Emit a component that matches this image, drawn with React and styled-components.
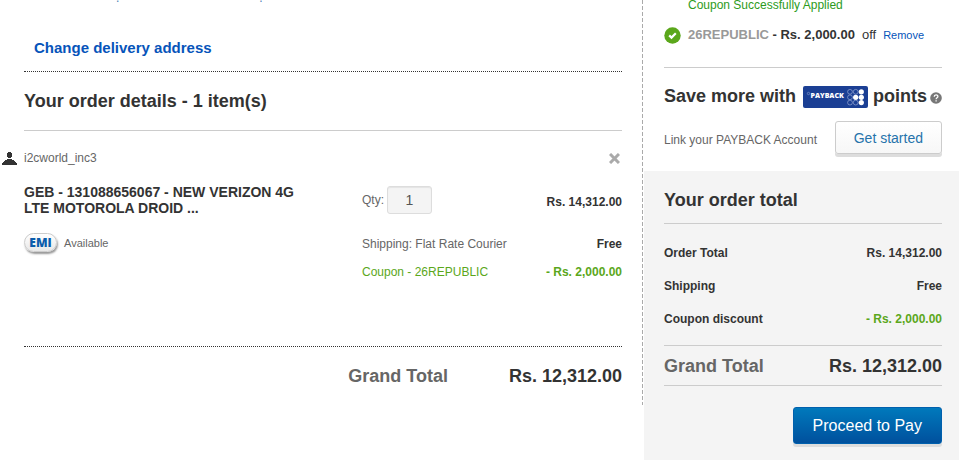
import React, { useState } from 'react';
import styled, { createGlobalStyle } from 'styled-components';

const totals = [
  { label: "Order Total", value: "Rs. 14,312.00" },
  { label: "Shipping", value: "Free" },
  { label: "Coupon discount", value: "- Rs. 2,000.00", discount: true },
];

const GlobalStyle = createGlobalStyle`
  * {
    box-sizing: border-box;
  }

  body {
    margin: 0;
    background: #fff;
    color: #333;
    font-family: "Liberation Sans", Arial, sans-serif;
    font-size: 12px;
    line-height: 16px;
  }
`

const Page = styled.div`
  display: flex;
  align-items: flex-start;
  min-height: 100vh;
`
const Main = styled.main`
  flex: 1;
  min-width: 0;
  min-height: 405px;
  padding: 0 21px 0 24px;
  background: repeating-linear-gradient(#aaa 0 4px, transparent 4px 6px) right / 1px 100% no-repeat;
`
const Side = styled.aside`
  flex: 0 0 315px;
  min-height: 100vh;
  margin-left: 1px;
  display: flex;
  flex-direction: column;
`

const AddressEdge = styled.div`
  display: flex;
  gap: 140px;
  height: 2px;
  padding-left: 92px;
  overflow: hidden;
  align-items: flex-end;
  line-height: 8px;
  color: #4f7fb5;
`
const AddressRow = styled.div`
  padding: 36px 10px 13px;
  height: 70px;
  border-bottom: 1px dotted #333;
  line-height: 20px;
`
const AddressLink = styled.a`
  color: #0654ba;
  font-size: 15px;
  font-weight: bold;
  text-decoration: none;
`
const Title = styled.h2`
  margin: 0;
  padding: ${(props)=>props.$pad || "0"};
  border-bottom: ${(props)=>props.$line ? "1px solid #ccc" : "none"};
  display: flex;
  align-items: center;
  font-size: 18px;
  line-height: 24px;
  white-space: nowrap;
`
const Seller = styled.div`
  display: flex;
  align-items: center;
  gap: 7px;
  height: 18px;
  margin: 18px 0 17px -22px;
  color: #666;
`
const CloseButton = styled.button`
  display: flex;
  margin-left: auto;
  padding: 0 2px;
  border: 0;
  background: none;
  cursor: pointer;
`
const Item = styled.div`
  display: grid;
  grid-template-columns: 13fr 10fr;
  min-height: 163px;
  border-bottom: 1px dotted #333;
`
const ProductName = styled.h3`
  max-width: 290px;
  margin: 0 0 17px;
  font-size: 14px;
  line-height: 16px;
`
const Available = styled.div`
  display: flex;
  align-items: center;
  gap: 7px;
  color: #666;
  font-size: 11px;
`
const EmiBadge = styled.span`
  width: 33px;
  height: 19px;
  border: 1px solid #ccc;
  border-radius: 10px;
  background: linear-gradient(#fff, #e8e8e8);
  box-shadow: 1px 2px 2px #999;
  color: #0a5cab;
  font-family: "Open Sans", sans-serif;
  font-size: 12px;
  font-weight: 800;
  line-height: 17px;
  text-align: center;
`
const Line = styled.div`
  display: flex;
  align-items: center;
  justify-content: space-between;
  height: 28px;
  color: ${(props)=>props.$green ? "#5ba71b" : "#666"};
`
const QtyLine = styled(Line)`
  align-items: flex-end;
  height: 30px;
  margin-bottom: 16px;
`
const Price = styled.strong`
  color: ${(props)=>props.$green ? "#5ba71b" : "#333"};

  ${QtyLine} & {
    padding-bottom: 4px;
  }
`
const QtyLabel = styled.label`
  display: flex;
  align-items: center;
  gap: 3px;
`
const QtyInput = styled.input`
  width: 45px;
  height: 28px;
  padding: 0;
  border: 1px solid #ddd;
  border-radius: 3px;
  background: #f4f4f4;
  box-shadow: inset 0 1px 1px #e4e4e4;
  color: #555;
  font: 14px "Liberation Sans", Arial, sans-serif;
  text-align: center;
`
const GrandTotal = styled.div`
  display: flex;
  align-items: center;
  justify-content: flex-end;
  gap: 61px;
  height: 58px;
  font-size: 18px;
  font-weight: bold;
  white-space: nowrap;

  span {
    color: #666;
  }
`
const SideTotal = styled(GrandTotal)`
  justify-content: space-between;
  gap: 10px;
  height: 41px;
  border: solid #ccc;
  border-width: 1px 0;
`

const Savings = styled.section`
  padding: 0 17px 13px 20px;
`
const Notice = styled.p`
  margin: 0;
  padding-left: 24px;
  color: #2d9b1c;
  line-height: 10px;
`
const Coupon = styled.div`
  display: flex;
  align-items: center;
  gap: 7px;
  height: 58px;
  padding-bottom: 7px;
  border-bottom: 1px solid #ccc;
  font-size: 13px;

  b > span {
    color: #999;
  }
`
const RemoveLink = styled.a`
  color: #0654ba;
  font-size: 11px;
  text-decoration: none;
`
const PaybackLogo = styled.svg`
  margin: 2px 5px 0 7px;
`
const HelpIcon = styled.svg`
  margin: 4px 0 0 auto;
`
const LinkAccount = styled.div`
  display: flex;
  align-items: center;
  justify-content: space-between;
  height: 37px;
  margin-top: 13px;
  color: #666;
  white-space: nowrap;
`
const Button = styled.button`
  align-self: flex-start;
  height: ${(props)=>props.$primary ? "37px" : "33px"};
  padding: 0 ${(props)=>props.$primary ? "19px" : "18px"};
  border: 1px solid ${(props)=>props.$primary ? "#0060ad" : "#ccc"};
  border-radius: 3px;
  background: ${(props)=>props.$primary ? "linear-gradient(#0079bc, #00509d)" : "linear-gradient(#fff, #f7f7f7)"};
  box-shadow: 0 3px 0 #ddd;
  color: ${(props)=>props.$primary ? "#fff" : "#2673ab"};
  font: ${(props)=>props.$primary ? "16px" : "14px"} "Liberation Sans", Arial, sans-serif;
  cursor: pointer;
`
const Summary = styled.section`
  flex: 1;
  display: flex;
  flex-direction: column;
  padding: 17px 17px 14px 20px;
  background: #f4f4f4;
`
const TotalsTable = styled.table`
  width: 100%;
  margin: 12px 0 10px;
  border-collapse: collapse;
  font-weight: bold;

  th, td {
    height: 33px;
    padding: 0;
  }
  th {
    text-align: left;
  }
  td {
    text-align: right;
  }
`
const PayRow = styled.div`
  display: flex;
  justify-content: flex-end;
  margin-top: 21px;
`

const PersonIcon = () => (
  <svg width="15" height="13" viewBox="0 0 15 13" fill="#333" aria-hidden="true">
    <path d="M6 0h3v1h1v4H9v1H6V5H5V1h1zM5 7h5v1h2v1h1v1h1v1h1v2H0v-2h1v-1h1V9h1V8h2z" />
  </svg>
)

const CloseIcon = () => (
  <svg width="11" height="11" viewBox="0 0 11 11" aria-hidden="true">
    <path d="M1 1l9 9M10 1l-9 9" stroke="#aaa" strokeWidth="3" />
  </svg>
)

const CheckIcon = () => (
  <svg width="17" height="17" viewBox="0 0 17 17" aria-hidden="true">
    <circle cx="8.5" cy="8.5" r="8.2" fill="#5ba71b" />
    <path d="M5.2 8.4l2.3 2.2L11.8 6.3" fill="none" stroke="#fff" strokeWidth="2.2" />
  </svg>
)

const Payback = () => (
  <PaybackLogo width="65" height="22" viewBox="0 0 65 22" role="img" aria-label="PAYBACK">
    <rect width="65" height="22" rx="2" fill="#1b3f94" />
    <circle cx="5.5" cy="7.5" r="1.2" fill="none" stroke="#8fa3d0" strokeWidth=".6" />
    <text x="7.5" y="11.5" fill="#fff" fontFamily="Open Sans, sans-serif" fontSize="7" fontWeight="800">PAYBACK</text>
    {[5.8, 11.3, 16.6].map((y, row)=>(
      [47, 52.7, 58.3].map((x, col)=>{
        const solid = col === 2 || (col === 1 && row === 1)
        return (
          <circle key={x + "-" + y} cx={x} cy={y} r={solid ? 2.6 : 2.4} fill={solid ? "#fff" : "none"} stroke={solid ? "none" : "#a9b7dc"} strokeWidth=".6" />
        )
      })
    ))}
  </PaybackLogo>
)

const Help = () => (
  <HelpIcon width="12" height="12" viewBox="0 0 12 12" role="img" aria-label="Help">
    <circle cx="6" cy="6" r="5.8" fill="#777" />
    <path d="M4.2 4.8c0-2.5 3.7-2.4 3.7-.3 0 1.4-1.8 1.2-1.8 2.7M6.1 8.2v1.4" fill="none" stroke="#fff" strokeWidth="1.3" />
  </HelpIcon>
)

const App = () => {
  const [qty,setQty] = useState("1")
  return (
    <Page>
      <GlobalStyle/>
      <Main>
        <AddressEdge><span>,</span><span>,</span></AddressEdge>
        <AddressRow>
          <AddressLink href="#address">Change delivery address</AddressLink>
        </AddressRow>
        <Title $pad="17px 0" $line>Your order details - 1 item(s)</Title>
        <Seller>
          <PersonIcon/>
          <span>i2cworld_inc3</span>
          <CloseButton type="button" aria-label="Remove item"><CloseIcon/></CloseButton>
        </Seller>
        <Item>
          <div>
            <ProductName>GEB - 131088656067 - NEW VERIZON 4G LTE MOTOROLA DROID ...</ProductName>
            <Available><EmiBadge>EMI</EmiBadge>Available</Available>
          </div>
          <div>
            <QtyLine>
              <QtyLabel>
                Qty:
                <QtyInput value={qty} onChange={(e)=>setQty(e.target.value)} />
              </QtyLabel>
              <Price>Rs. 14,312.00</Price>
            </QtyLine>
            <Line>
              <span>Shipping: Flat Rate Courier</span>
              <Price>Free</Price>
            </Line>
            <Line $green>
              <span>Coupon - 26REPUBLIC</span>
              <Price $green>- Rs. 2,000.00</Price>
            </Line>
          </div>
        </Item>
        <GrandTotal><span>Grand Total</span>Rs. 12,312.00</GrandTotal>
      </Main>
      <Side>
        <Savings>
          <Notice>Coupon Successfully Applied</Notice>
          <Coupon>
            <CheckIcon/>
            <b><span>26REPUBLIC</span> - Rs. 2,000.00</b>
            off
            <RemoveLink href="#remove">Remove</RemoveLink>
          </Coupon>
          <Title $pad="16px 0 0">Save more with<Payback/>points<Help/></Title>
          <LinkAccount>
            Link your PAYBACK Account
            <Button type="button">Get started</Button>
          </LinkAccount>
        </Savings>
        <Summary>
          <Title $pad="0 0 11px" $line>Your order total</Title>
          <TotalsTable>
            <tbody>
              {totals.map((item)=>(
                <tr key={item.label}>
                  <th scope="row">{item.label}</th>
                  <td><Price $green={item.discount}>{item.value}</Price></td>
                </tr>
              ))}
            </tbody>
          </TotalsTable>
          <SideTotal><span>Grand Total</span>Rs. 12,312.00</SideTotal>
          <PayRow>
            <Button type="button" $primary>Proceed to Pay</Button>
          </PayRow>
        </Summary>
      </Side>
    </Page>
  )
}

export default App
